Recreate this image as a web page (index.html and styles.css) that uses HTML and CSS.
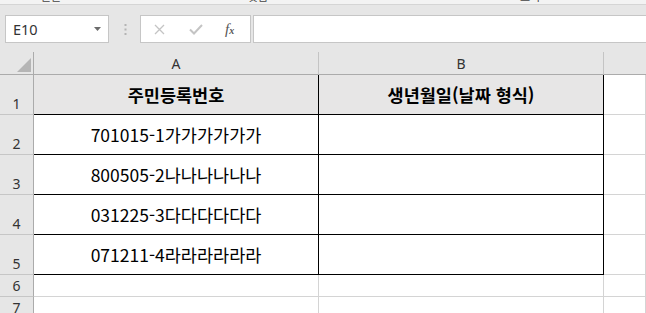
FILE: index.html
```html
<!DOCTYPE html>
<html lang="ko">
<head>
    <meta charset="UTF-8">
    <meta name="viewport" content="width=device-width, initial-scale=1.0">
    <title>주민등록번호</title>
    <link rel="stylesheet" href="styles.css">
</head>
<body>
    <div class="ribbon-edge">
        <span class="rlabel first">글꼴</span>
        <span class="rlabel second">맞춤</span>
        <span class="rlabel third">표시</span>
    </div>

    <div class="formula-bar">
        <div class="name-box">
            <span>E10</span>
            <svg width="7" height="4" viewBox="0 0 7 4"><path d="M0 0H7L3.5 4Z" fill="#6b6b6b"/></svg>
        </div>
        <div class="grip">
            <svg width="3" height="11" viewBox="0 0 3 11"><rect x="0.5" y="0" width="2" height="2" fill="#b4b4b4"/><rect x="0.5" y="4.5" width="2" height="2" fill="#b4b4b4"/><rect x="0.5" y="9" width="2" height="2" fill="#b4b4b4"/></svg>
        </div>
        <div class="fx-buttons">
            <svg class="btn-x" width="11" height="11" viewBox="0 0 11 11"><path d="M1 1L10 10M10 1L1 10" stroke="#c4c4c4" stroke-width="1.3" fill="none"/></svg>
            <svg class="btn-ok" width="14" height="11" viewBox="0 0 14 11"><path d="M1 5.5L5 9.5L13 1" stroke="#c4c4c4" stroke-width="2" fill="none"/></svg>
            <span class="fx">f<span class="fx-x">x</span></span>
        </div>
        <div class="formula-input"></div>
    </div>

    <div class="sheet">
        <div class="corner"><svg width="14" height="14" viewBox="0 0 14 14"><path d="M14 0V14H0Z" fill="#b5b5b5"/></svg></div>
        <div class="col-head">A</div>
        <div class="col-head">B</div>
        <div class="col-head last"></div>

        <div class="row-head">1</div>
        <div class="cell title boxed">주민등록번호</div>
        <div class="cell title boxed">생년월일(날짜 형식)</div>
        <div class="cell"></div>

        <div class="row-head">2</div>
        <div class="cell boxed">701015-1가가가가가가</div>
        <div class="cell boxed"></div>
        <div class="cell"></div>

        <div class="row-head">3</div>
        <div class="cell boxed">800505-2나나나나나나</div>
        <div class="cell boxed"></div>
        <div class="cell"></div>

        <div class="row-head">4</div>
        <div class="cell boxed">031225-3다다다다다다</div>
        <div class="cell boxed"></div>
        <div class="cell"></div>

        <div class="row-head">5</div>
        <div class="cell boxed">071211-4라라라라라라</div>
        <div class="cell boxed"></div>
        <div class="cell"></div>

        <div class="row-head short">6</div>
        <div class="cell"></div>
        <div class="cell"></div>
        <div class="cell"></div>

        <div class="row-head short">7</div>
        <div class="cell"></div>
        <div class="cell"></div>
        <div class="cell"></div>
    </div>
</body>
</html>
```

FILE: styles.css
```css
body {
    margin: 0;
    width: 646px;
    height: 313px;
    overflow: hidden;
    background: #e6e6e6;
    font-family: "Noto Sans CJK KR", sans-serif;
}
.ribbon-edge {
    height: 4px;
    background: #f3f3f3;
    border-bottom: 1px solid #d5d5d5;
    overflow: hidden;
    display: flex;
}
.rlabel {
    font-size: 11px;
    line-height: 11px;
    margin-top: -9px;
    color: #444;
    width: 22px;
}
.rlabel.first {
    margin-left: 41px;
}
.rlabel.second {
    margin-left: 185px;
}
.rlabel.third {
    margin-left: 250px;
}
.formula-bar {
    display: flex;
    align-items: center;
    padding: 10px 0 9px 5px;
}
.name-box {
    height: 26px;
    width: 88px;
    background: #fff;
    border: 1px solid #c6c6c6;
    display: flex;
    align-items: center;
    justify-content: space-between;
    padding: 0 7px;
    font-family: "Noto Sans", sans-serif;
    font-size: 14.5px;
    color: #333;
}
.grip {
    width: 30px;
    display: flex;
    justify-content: center;
    padding-left: 1px;
}
.fx-buttons {
    width: 109px;
    height: 26px;
    background: #fff;
    border: 1px solid #c6c6c6;
    display: flex;
    align-items: center;
}
.btn-x {
    margin-left: 13px;
}
.btn-ok {
    margin-left: 24px;
}
.fx {
    margin-left: 22px;
    font-family: "Liberation Serif", serif;
    font-style: italic;
    font-size: 15px;
    color: #555;
}
.fx-x {
    font-size: 10px;
    font-weight: bold;
}
.formula-input {
    flex: 1;
    height: 26px;
    margin-left: 2px;
    background: #fff;
    border: 1px solid #c6c6c6;
    border-right: none;
}
.sheet {
    display: grid;
    grid-template-columns: 34px 285px 285px 1fr;
    grid-template-rows: 23px repeat(5, 40px) 22px 22px;
    background: #fff;
}
.corner {
    background: #e6e6e6;
    border-right: 1px solid #ababab;
    border-bottom: 1px solid #ababab;
    display: flex;
    justify-content: flex-end;
    align-items: flex-end;
    padding: 0 2px 2px 0;
}
.col-head {
    background: #e6e6e6;
    border-right: 1px solid #c4c4c4;
    border-bottom: 1px solid #ababab;
    display: flex;
    align-items: center;
    justify-content: center;
    font-family: "Noto Sans", sans-serif;
    font-size: 14px;
    color: #333;
}
.col-head.last {
    border-right: none;
}
.row-head {
    background: #e6e6e6;
    border-right: 1px solid #ababab;
    border-bottom: 1px solid #c6c6c6;
    display: flex;
    align-items: flex-end;
    justify-content: center;
    padding-bottom: 1px;
    font-family: "Noto Sans", sans-serif;
    font-size: 14px;
    line-height: 18px;
    color: #333;
}
.row-head.short {
    align-items: center;
    padding-bottom: 0;
}
.cell {
    border-right: 1px solid #d4d4d4;
    border-bottom: 1px solid #d4d4d4;
    display: flex;
    align-items: center;
    justify-content: center;
    font-size: 17.5px;
    color: #000;
}
.cell.boxed {
    border-right-color: #000;
    border-bottom-color: #000;
}
.cell.title {
    background: #e7e6e6;
    font-weight: bold;
}
```
